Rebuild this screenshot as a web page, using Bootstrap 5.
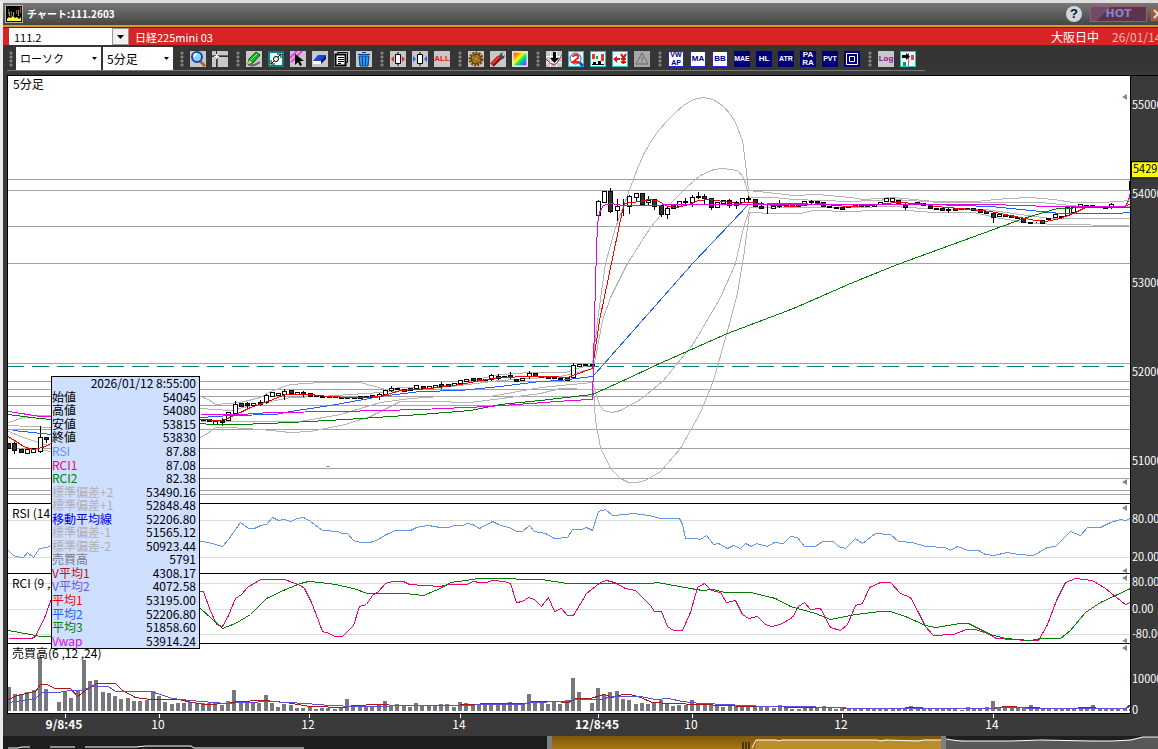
<!DOCTYPE html>
<html lang="ja">
<head>
<meta charset="utf-8">
<meta name="viewport" content="width=device-width, initial-scale=1">
<title>チャート:111.2603</title>
<link href="https://cdn.jsdelivr.net/npm/bootstrap@5.3.0/dist/css/bootstrap.min.css" rel="stylesheet">
<style>
body{font-family:"Noto Sans CJK JP",sans-serif;font-size:12px;line-height:16px;background:#3a3a3a;color:#fff}
.app{height:100vh;min-height:480px;border-left:3px solid #ececec;border-top:3px solid #dedede}
.titlebar{height:25px;background:linear-gradient(#777 0,#454542 88%,#333 88%);padding:0 0 3px 2px;position:relative}
.titlebar::after{content:"";position:absolute;left:0;right:0;bottom:1px;height:2px;background:#d89a22}
.titlebar h1{font-size:10px;line-height:16px;font-weight:700}
.help{width:16px;height:16px;border-radius:8px;border:0;padding:0;background:#cdd7e0;color:#111;font:700 13px/16px "Liberation Sans",sans-serif}
.hot{width:57px;height:16px;border:1px solid #9a5a70;border-radius:0;padding:0;background:linear-gradient(135deg,#704a66 28%,#5b344c 29%);color:#8583cf;font:700 11px/14px "DejaVu Sans",sans-serif}
.closer{width:7px;height:14px;border:0;padding:0;background:#9c6040}
.closer svg{display:block}
.symbolbar{height:17px;background:#d82626;padding-left:6px}
.code{width:103px;height:17px;border:0;border-radius:0;padding:0 5px;background:#fff;color:#000;font-size:11px;line-height:16px}
.drop{width:17px;height:17px;border:1px solid #999;border-radius:0;padding:0;background:#f1f1f1}
.issue{font-size:11px;margin-left:6px}
.session{width:61px}
.date{width:46px;color:#f3b9b9}
.tools{height:30px;background:#353535;gap:6px;padding:2px 0 1px 4px;border-bottom:4px solid #3a3a3a;position:relative}
.tools::after{content:"";position:absolute;left:4px;width:918px;bottom:0;height:1px;background:#777}
.grip{width:6px;height:16px;background:radial-gradient(circle at 4px 2px,#858585 1px,transparent 2px) 0 0/6px 4px}
.grip-first{margin-right:-3px}
.tools .form-select{height:23px;border:0;border-radius:0;padding:0 12px 0 4px;color:#000;font-size:11px;line-height:23px;background:#fff url("data:image/svg+xml,%3Csvg xmlns='http://www.w3.org/2000/svg' width='5' height='3'%3E%3Cpath d='M0 0h5L2.500 3z'/%3E%3C/svg%3E") no-repeat right 4px center/5px 3px}
.tools .sel-a{width:85px}.tools .sel-b{width:70px;font-size:12px;margin-left:-4px;margin-right:-1px}
.tb{width:16px;height:16px;border:0;border-radius:0;padding:0;background:#c8c8c8;color:#fff;font:700 8px/16px "Liberation Sans",sans-serif;overflow:hidden;white-space:nowrap}
.tb svg{display:block}
.navy{background:#000078}
.three{font-size:7px}
.lit{background:#fff;color:#000080;box-shadow:inset 0 0 0 1px #2323e0}
.duo{line-height:8px;white-space:normal}
.redtext{color:#f01010}
.plum{color:#8b158b}
.cy{background:#e9ffff;box-shadow:inset 0 0 0 1px #27c7c9}
.charts{margin-left:4px;border-top:1px solid #000;min-height:0}
.panel{background:#fff;border:1px solid #000;border-top:0;color:#000;min-width:0;position:relative}
.panel svg,.scale svg{display:block;width:100%;height:100%}
.sub{height:70px;flex:none}
.scale{width:27px;flex:none;overflow:hidden}
.scale text{font-size:11px;fill:#fff}
.scale .now{fill:#000}
.caption{position:absolute;left:4px;top:1px}
.caption-main{left:5px;top:0}
.line{fill:none;stroke-width:1;shape-rendering:crispEdges}
.tip{position:absolute;left:48px;top:373px;width:149px;background:#cfdfff;border:1px solid #000;color:#000;z-index:2}
.tip table{width:100%;height:271px;font-size:12px;line-height:12px}
.tip td,.tip th{padding:0 3px 1px 0;font-weight:400;white-space:nowrap}
.tip td{text-align:right}
.times{height:22px;margin:0 28px 0 5px;position:relative;flex:none}
.times span{position:absolute;top:2px;width:60px;margin-left:-31px;text-align:center}
.times span::before{content:"";position:absolute;left:31px;top:-2px;width:1px;height:4px;background:#fff}
.overview{height:13px;flex:none;background:#1e1e1e}
.overview svg{display:block;width:100%;height:13px}
</style>
</head>
<body>
<div class="app d-flex flex-column overflow-hidden position-relative">
<header class="titlebar d-flex align-items-center flex-shrink-0">
<svg width="18" height="18" viewBox="0 0 18 18" aria-hidden="true"><path fill="#b4b4aa" d="M0 0h18v18H0z"/><path d="M1 1h16v16H1z"/><path fill="#ff4" d="M2 16v-2l2-2 2 1 2-2 2 2 2-1 2 2 2-2v4z"/><path stroke="#e22" d="M3.500 4v5M6.500 6v6M11.500 5v4M15.500 2v6"/><path stroke="#2e2" d="M4.500 7v4M8.500 7v4M13.500 5v6"/></svg>
<h1 class="m-0 ms-1">チャート:111.2603</h1>
<div class="ms-auto d-flex align-items-center"><button class="help" aria-label="ヘルプ">?</button><button class="hot ms-2">HOT</button><button class="closer ms-1 overflow-hidden" aria-label="閉じる"><svg width="14" height="14"><path d="M3 3l8 8M11 3l-8 8" stroke="#ddd" stroke-width="2"/></svg></button></div>
</header>
<div class="symbolbar d-flex align-items-center flex-shrink-0 overflow-hidden text-nowrap">
<input class="code" value="111.2" aria-label="銘柄コード"><button class="drop d-flex align-items-center justify-content-center" aria-label="銘柄一覧"><svg width="7" height="4"><path d="M0 0h7L3.500 4z"/></svg></button>
<span class="issue">日経225mini 03</span>
<span class="session ms-auto">大阪日中</span><span class="date overflow-hidden">26/01/14</span>
</div>
<div class="tools d-flex align-items-center flex-shrink-0" role="toolbar">
<span class="grip grip-first"></span>
<select class="form-select sel-a flex-shrink-0" aria-label="足種"><option>ローソク</option></select>
<select class="form-select sel-b flex-shrink-0" aria-label="期間"><option>5分足</option></select>
<span class="grip"></span>
<button class="tb" aria-label="拡大"><svg width="16" height="16"><path d="M10 10l5 5" stroke="#a63" stroke-width="3"/><circle cx="7" cy="6" r="5" fill="#8cd4ff" stroke="#1647b8" stroke-width="2"/><path d="M4 6a3 3 0 0 1 3-3" stroke="#fff" stroke-width="2" fill="none"/></svg></button>
<button class="tb" aria-label="十字線"><svg width="16" height="16"><path d="M0 5.500h16M4.500 0v16" stroke="#333"/><path d="M4.500 3v5M2 5.500h5" stroke="#dfffdf"/><path d="M0 4.500h4M6 4.500h10M5.500 7v9" stroke="#587058"/></svg></button>
<span class="grip"></span>
<button class="tb" aria-label="描画"><svg width="16" height="16"><path d="M2 13c4 3 8 1 12-2" stroke="#666" stroke-width="2" fill="none"/><path d="M2 13l1-5 7-7 4 3-7 8z" fill="#16b51e" stroke="#07560a"/><path d="M2 13l1-4 3 3z" fill="#ffe28a"/><path d="M5 9l6-6" stroke="#8f8"/></svg></button>
<button class="tb cy" aria-label="トレンド線"><svg width="16" height="16"><path d="M1 1h14v14H1z" fill="none" stroke="#087f80" stroke-width="2"/><path d="M3 13L13 3M9 3h4v4M3 9v4h4" stroke="#000" fill="none"/><circle cx="8" cy="8" r="2.500" fill="#fff" stroke="#000"/></svg></button>
<button class="tb" aria-label="選択"><svg width="16" height="16"><path d="M0 7l7-7M1 11L12 0" stroke="#f03aec" stroke-width="2"/><path d="M5 3v11l3-3 2 4 2-1-2-4h4z"/></svg></button>
<button class="tb" aria-label="消しゴム"><svg width="16" height="16"><path d="M1 10l5-6h8l-4 6z" fill="#1b42d8"/><path d="M1 10h8v3H1z" fill="#fff"/><path d="M9 10l5-6v4l-5 5z" fill="#001879"/></svg></button>
<button class="tb" aria-label="コピー"><svg width="16" height="16"><path d="M3.500 1.500h10v10h-10z" fill="#fff" stroke="#000"/><path d="M1.500 3.500h10v11h-10z" fill="#fff" stroke="#000" stroke-width="2"/><path d="M4 6.500h6M4 8.500h6M4 10.500h6M4 12.500h3" stroke="#000"/></svg></button>
<button class="tb" aria-label="削除"><svg width="16" height="16"><path d="M3 5h10l-1 10H4z" fill="#2196f3" stroke="#063b82"/><path d="M2 3.500h12M6 1.500h4M6.500 6v8M9.500 6v8" stroke="#063b82"/></svg></button>
<span class="grip"></span>
<button class="tb" aria-label="幅を広げる"><svg width="16" height="16"><path d="M8 1v14" stroke="#000"/><path d="M5.500 3.500h5v9h-5z" fill="#fff" stroke="#000"/><path d="M1 8l3-3v6zM15 8l-3-3v6z" fill="#e52727"/></svg></button>
<button class="tb" aria-label="幅を狭める"><svg width="16" height="16"><path d="M8 1v14" stroke="#000"/><path d="M5.500 3.500h5v9h-5z" fill="#fff" stroke="#000"/><path d="M4 8L1 5v6zM12 8l3-3v6z" fill="#235ef0"/></svg></button>
<button class="tb redtext" aria-label="全表示">ALL</button>
<span class="grip"></span>
<button class="tb" aria-label="設定"><svg width="16" height="16"><circle cx="8" cy="8" r="6" fill="none" stroke="#714707" stroke-width="3" stroke-dasharray="2 1"/><circle cx="8" cy="8" r="5" fill="#95671a" stroke="#543605"/><path d="M4 6l8 4M10 4l-4 8" stroke="#c2933a"/></svg></button>
<button class="tb" aria-label="ツール"><svg width="16" height="16"><path d="M2 14l8-8" stroke="#8b0909" stroke-width="5"/><path d="M2 13l8-8" stroke="#f33" stroke-width="2"/><path d="M9 7l1-4 3-2-1 3 1 1 2-1-1 3-3 2z" fill="#444"/></svg></button>
<button class="tb" aria-label="配色"><svg width="16" height="16"><defs><linearGradient id="hue" x2="1" y2="1"><stop stop-color="#f33"/><stop offset=".25" stop-color="#f90"/><stop offset=".42" stop-color="#ff0"/><stop offset=".58" stop-color="#0e6"/><stop offset=".76" stop-color="#28f"/><stop offset="1" stop-color="#d0f"/></linearGradient></defs><path d="M1 1h14v14H1z" fill="url(#hue)" stroke="#fff"/></svg></button>
<span class="grip"></span>
<button class="tb" aria-label="売買"><svg width="16" height="16"><path d="M4.500 0v16M10.500 0v16M0 5.500h16M0 11.500h16" stroke="#fff"/><path d="M0 8l4 4 4 2 3-2 5-8" fill="none" stroke="#c22" stroke-width="1"/><path d="M7 1h3v6h3l-4.500 5L4 7h3z"/></svg></button>
<button class="tb cy" aria-label="検索"><svg width="16" height="16"><path d="M11 11l4 4" stroke="#214bc8" stroke-width="3"/><circle cx="7.500" cy="7.500" r="5.500" fill="#fff" stroke="#214bc8"/><path d="M5 6q0-2 3-2 3 0 2 3l-5 4h6" fill="none" stroke="#e22" stroke-width="2"/></svg></button>
<button class="tb cy" aria-label="出来高"><svg width="16" height="16"><path d="M2 3h3v5H2zM11 3h3v7h-3z" fill="#e33"/><path d="M6 5h2v3H6z" fill="#1b1"/><path d="M2 13.500h12" stroke="#111"/><path d="M3 11h3v3H3zM8 10h3v4H8z"/></svg></button>
<button class="tb cy" aria-label="通貨"><svg width="16" height="16"><path d="M1 8l4-3v2h3v2H5v3z" fill="#e11"/><path d="M9 3l2.500 4L14 3M11.500 7v6M9 8h5M9 11h5" fill="none" stroke="#d11" stroke-width="2"/></svg></button>
<button class="tb" aria-label="警告"><svg width="16" height="16"><path d="M0 0h16v16H0z" fill="#a7a7a7"/><path d="M8 2l6 11H2zM8 6v4M8 11v1" fill="none" stroke="#686868"/></svg></button>
<span class="grip"></span>
<button class="tb lit duo three">VW AP</button><button class="tb lit">MA</button><button class="tb lit">BB</button><button class="tb navy three">MAE</button><button class="tb navy">HL</button><button class="tb navy three">ATR</button><button class="tb navy duo">PA RA</button><button class="tb navy three">PVT</button>
<button class="tb navy" aria-label="枠"><svg width="16" height="16"><path d="M2.500 2.500h11v11h-11zM5.500 5.500h5v5h-5z" fill="none" stroke="#fff"/></svg></button>
<span class="grip"></span>
<button class="tb plum">Log</button>
<button class="tb cy" aria-label="右へ移動"><svg width="16" height="16"><path d="M8 2h1v13H8zM11 4h3v5h-3z" fill="#e44"/><path d="M3 11h3v4H3z" fill="#18a020"/><path d="M2 4h4V2l4 3.500L6 9V7H2z"/></svg></button>
</div>

<main class="charts flex-fill d-flex flex-column">
<section class="flex-fill d-flex overflow-hidden">
<div class="panel flex-fill"><span class="caption caption-main">5分足</span>
<svg viewBox="8 76 1122 427" preserveAspectRatio="none" role="img" aria-label="価格チャート"><g id="levels" class="line" stroke="#a2a2a2"></g><path d="M7 366.500h1123" class="line" stroke="#008078" stroke-dasharray="17 8"/><g id="bands" transform="translate(.5 .5)"></g><g id="candles" shape-rendering="crispEdges"></g><g id="averages" transform="translate(.5 .5)"></g><path fill="#888" d="M1122 97l5-3v6zM1122 482l5-3v6z"/><path d="M1129 181h1v9h-1z"/><path d="M326 466.500h4" stroke="#999"/></svg></div>
<div class="scale"><svg viewBox="1131 76 27 427" preserveAspectRatio="none"><text x="1132" y="109">55000</text><text x="1132" y="198">54000</text><text x="1132" y="287">53000</text><text x="1132" y="375">52000</text><text x="1132" y="464">51000</text><path d="M1131 161h40v17h-40z"/><path fill="#ff0" d="M1132 162h40v15h-40z"/><text class="now" x="1133" y="173">54290</text></svg></div>
</section>
<section class="sub d-flex"><div class="panel flex-fill"><span class="caption">RSI (14)</span><svg viewBox="8 504 1122 69" preserveAspectRatio="none" role="img" aria-label="RSI"><path class="line" stroke="#dcdcdc" d="M8 520.500h1122M8 557.500h1122"/><g id="rsi" transform="translate(.5 .5)"></g><path fill="#888" d="M1122 508l5-3v6zM1122 571l5-3v5z"/></svg></div><div class="scale"><svg viewBox="1131 504 27 69" preserveAspectRatio="none"><text x="1132" y="523">80.00</text><text x="1132" y="560">20.00</text></svg></div></section>
<section class="sub d-flex"><div class="panel flex-fill"><span class="caption">RCI (9 ,26)</span><svg viewBox="8 574 1122 69" preserveAspectRatio="none" role="img" aria-label="RCI"><path class="line" stroke="#dcdcdc" d="M8 583.500h1122M8 609.500h1122M8 634.500h1122"/><g id="rci" transform="translate(.5 .5)"></g><path fill="#888" d="M1122 578l5-3v6zM1122 641l5-3v5z"/></svg></div><div class="scale"><svg viewBox="1131 574 27 69" preserveAspectRatio="none"><text x="1132" y="586">80.00</text><text x="1132" y="612">0.00</text><text x="1132" y="637">-80.00</text></svg></div></section>
<section class="sub d-flex"><div class="panel flex-fill"><svg viewBox="8 644 1122 69" preserveAspectRatio="none" role="img" aria-label="売買高"><g id="volume" fill="#77777f" shape-rendering="crispEdges"></g><g id="volavg" transform="translate(.5 .5)"></g><path fill="#888" d="M1122 648l5-3v6z"/></svg><span class="caption">売買高(6 ,12 ,24)</span></div><div class="scale"><svg viewBox="1131 644 27 69" preserveAspectRatio="none"><text x="1132" y="682">10000</text><text x="1132" y="713">0</text></svg></div></section>
</main>
<div class="times" id="times"></div>
<div class="overview"><svg viewBox="3 736 1155 13" preserveAspectRatio="none" aria-hidden="true"><defs><linearGradient id="gold" x2="0" y2="1"><stop stop-color="#7c560c"/><stop offset="1" stop-color="#a97812"/></linearGradient></defs><path fill="url(#gold)" d="M551 736h391v13H551z"/><path fill="#b98e28" d="M755 749l2-9h185v9z"/><path fill="#595959" d="M946 740h14l6 1h60l20-1 60 1 20-1 16-3h16v12H946z"/><g fill="none" stroke="#fff"><path d="M8 748h10l4-1h8M50 747h25M85 747h51l10-1h45l3 2h110"/><path d="M752 748l4-8h20l3 1 3-1h95l3 1 6-1 32 1 6-1h18M946 739l6 1 9 1h50l30-1 50 1h22l18-1 12-3h15"/></g><path fill="#808080" d="M547 736h5v13h-5zM941 736h5v13h-5z"/><path fill="#4b3509" d="M742 742h2v7h-2zM745 742h2v7h-2zM748 742h2v7h-2z"/></svg></div>

<div class="tip"><table><tbody id="quote"><tr><td colspan="2">2026/01/12 8:55:00</td></tr></tbody></table></div>
</div>
<script>
const $=id=>document.getElementById(id);
const line=(id,color,pts)=>$(id).insertAdjacentHTML('beforeend',`<polyline class="line" stroke="${color}" points="${pts}"/>`);
const rect=(x,y,w,h,f='',s='')=>`<rect x="${x}" y="${y}" width="${w}" height="${h}"${f?` fill="${f}"`:''}${s?` stroke="${s}"`:''}/>`;

// horizontal price levels
$('levels').innerHTML=[179,190,226,263,363,381,389,396,405,429,448,468,478,490,494].map(y=>`<path d="M8 ${y}.5H1130"/>`).join('');

// deviation bands
["8,422 20,418 30,415 51,415","8,425 51,427","8,431 20,436 35,441 51,446","8,437 25,447 51,451",
"200,396 208,399 215,404 240,402 260,397 270,391 290,384 320,382 360,382 385,389 400,387 430,388 460,382 500,374 530,372 565,372 580,367 592,364 597,320 605,263 615,227 627,195 637,168 643,154 650,142 658,130 667,120 675,112 683,105 693,99 703,97 713,99 723,106 730,114 735,122 742,140 745,163 748,190 767,192 793,195 817,194 850,197 863,199 893,197 933,201 975,201 1007,198 1030,197 1053,199 1073,202 1103,202 1130,200",
"200,408 230,410 260,403 290,397 320,396 380,392 460,385 500,380 560,376 593,368 602,320 610,297 627,263 650,227 670,203 687,186 700,175 713,169 723,168 737,170 743,177 747,190 749,197 773,197 793,199 850,201 893,199 940,202 1000,202 1040,202 1080,206 1130,206",
"200,421 300,421 340,414 380,402 410,398 440,396 490,396 540,387 592,382 596,395 599,404 603,410 612,412 620,410 640,399 663,380 693,343 720,297 735,263 743,227 748,212 749,207 793,207 850,207 893,206 940,209 985,209 1020,214 1050,218 1130,218",
"200,437 207,433 215,427 230,427 260,429 290,432 310,431 345,424 370,416 400,401 430,401 470,402 540,393 560,388 593,389 595,420 600,447 610,468 620,478 628,482 636,482 645,480 660,471 680,448 700,412 713,380 728,327 737,293 743,257 747,227 749,212 773,213 800,213 813,210 850,211 873,210 907,210 933,212 973,212 1000,218 1027,222 1053,224 1127,225 1130,226"
].forEach(p=>line('bands','#b4b4b4',p));

// candles: x, body top, body bottom, filled, high, low
const C=[[8,443,448,1],[14,443,450,1,442,453],[21,449,452,1],[27,449,453,0],[33,448,452,0],[40,437,451,0,426,452],[46,437,439,1,437,442],
[203,419,420,1],[209,419,421,1],[215,421,424,0],[222,420,422,1,418,425],[228,412,420,0],[235,404,413,0,401,413],[241,403,406,1],[247,403,405,1,402,407],[253,403,405,0],[260,402,404,1,400,405],[266,395,402,0,394,403],[272,392,396,0],[278,393,395,0],[284,391,394,0,389,399],[291,390,393,1],[297,392,394,0],[303,392,394,1,391,396],[310,393,396,1],[316,395,396,0],[322,396,397,1],[329,396,397,0],[335,396,397,1],[341,397,398,0],[347,397,398,1],[354,397,398,0],[360,396,398,1],[366,396,397,0],[372,395,397,1],[379,394,396,0,393,399],[385,390,394,0],[391,388,390,0,386,391],[397,388,389,1],[404,389,391,0],[410,388,390,1],[416,385,388,0],[423,386,388,1],[429,386,388,0],[435,385,387,0],[441,384,386,1,382,388],[448,384,386,1],[454,383,385,0],[460,380,383,0],[466,379,381,0],[473,378,380,1],[479,378,380,1],[485,379,380,1],[491,375,379,0,374,380],[498,376,378,1,374,379],[504,376,377,1],[510,375,377,1,372,378],[516,379,381,1],[522,378,380,0],[529,373,376,0,371,378],[535,373,376,1],[541,376,377,0],[548,376,378,1],[554,376,378,1],[560,378,379,1],[567,377,380,1],[573,365,377,0,363,378],[579,364,366,0],[585,364,365,1],[592,364,365,1],
[598,201,215,0,200,219],[604,191,202,0],[610,191,211,1,188,212],[617,206,210,0,199,220],[623,205,205,1,199,215],[629,196,206,0,195,213],[636,193,197,0,193,201],[642,193,204,1],[648,200,202,0,196,204],[654,199,206,1,199,209],[661,205,214,1,205,216],[667,208,214,0,206,218],[673,204,208,1],[679,201,206,0],[685,201,202,1,198,205],[692,197,202,0,195,206],[698,196,197,1,192,198],[704,196,198,1,194,203],[711,198,207,1,198,209],[717,202,207,0],[723,200,203,0],[729,200,205,1,199,207],[736,202,205,0,201,208],[742,198,202,0],[748,198,199,1,196,202],[755,199,206,1],[761,206,208,1,202,208],[767,208,208,1,205,213],[773,206,208,0],[779,203,206,0,200,207],[786,204,205,0],[792,203,206,1],[798,205,206,0],[804,201,205,0],[811,201,202,1,200,204],[817,201,202,1],[823,202,206,1],[829,206,207,0],[836,207,208,1],[842,207,209,1],[848,206,207,0],[855,205,206,1],[861,205,206,1],[867,205,206,1],[874,204,206,0],[880,202,204,0],[886,198,201,0],[892,198,201,0],[898,200,203,1],[905,205,207,1,203,209],[911,203,204,1],[917,202,204,0],[923,203,205,1],[930,206,208,1],[936,208,209,1],[942,208,210,1],[948,209,210,1,207,212],[955,208,210,1],[961,208,209,0],[967,208,209,1],[973,208,210,0],[980,209,212,1],[986,211,213,1],[993,213,217,1,212,222],[999,214,216,0],[1005,214,216,1],[1011,215,217,1],[1017,217,218,1],[1023,218,222,1],[1030,222,223,0],[1036,222,222,1],[1042,220,223,1],[1048,218,219,1],[1055,214,217,0],[1061,216,217,1],[1067,207,215,0],[1073,207,212,0],[1080,204,206,0],[1086,205,206,0],[1092,205,206,1],[1098,206,207,1],[1105,206,208,1],[1111,204,206,0,203,208],[1117,206,207,1],[1123,206,207,1]];
$('candles').innerHTML=C.map(([x,t,b,f,h=t,l=b])=>rect(x,h,1,l-h+1,'#000')+rect(x-1.5,t+.5,4,b-t,f?'#333':'#fff','#000')).join('');

// moving averages and VWAP
line('averages','#008000',"8,414 30,417 51,419");
line('averages','#008000',"200,423 210,424 240,424 290,422 345,419 420,414 470,410 500,404 540,400 592,394 623,380 657,364 727,333 793,308 850,283 897,264 993,229 1023,218 1057,208 1090,207 1130,207");
line('averages','#2060ff',"13,430 51,434");
line('averages','#2060ff',"200,417 230,415 275,414 290,411 330,405 380,396 420,391 460,390 500,386 540,381 560,380 592,376 595,373 693,262 748,204 787,203 827,204 930,204 960,205 990,206 1010,208 1030,210 1060,213 1115,213 1130,212");
line('averages','#f00',"8,436 25,447 33,449 42,447 51,443");
line('averages','#f00',"200,419 220,420 227,418 240,412 250,407 270,400 285,394 310,394 328,396 350,397 365,397 380,396 400,390 430,388 460,384 480,380 500,377 530,376 550,376 567,377 575,374 592,368 599,320 622,210 624,203 640,201 648,199 657,200 667,206 677,207 688,204 698,200 710,199 723,201 737,203 747,202 760,203 773,205 793,206 807,204 823,203 833,205 850,206 870,205 895,202 920,203 935,206 960,208 990,211 1010,215 1035,220 1045,221 1060,218 1075,212 1085,207 1100,206 1125,206 1130,203");
line('averages','#e800e8',"8,411 40,416 51,416");
line('averages','#e800e8',"200,414 240,414 270,412 340,411 420,409 488,406 530,403 570,400 592,399 593,364 595,280 597,223 599,212 603,205 610,203 623,205 700,204 850,204 1000,204 1010,205 1060,206 1125,206 1128,200 1130,192");

line('rsi','#6495ed',"8,550 13,555 20,557 23,557 27,552 33,557 39,548 46,547 51,545 200,541 208,542 222,546 228,539 240,522 248,528 254,528 260,525 266,524 272,517 278,520 284,519 290,521 297,518 303,517 310,521 322,530 338,531 341,533 347,533 353,540 360,542 368,542 374,541 386,534 395,530 410,530 416,527 428,525 440,527 448,527 454,525 462,525 467,523 472,524 479,528 492,521 498,524 511,528 516,531 522,531 529,525 534,531 545,533 554,538 567,537 572,529 581,529 586,527 592,530 598,511 605,509 612,515 626,514 632,513 648,515 661,518 679,518 682,524 685,538 694,538 700,539 706,535 713,544 718,543 727,548 733,545 740,548 745,543 751,546 756,543 767,546 774,542 783,543 790,536 797,537 804,546 815,546 822,541 833,541 838,546 845,548 855,538 862,543 875,533 890,534 898,541 912,542 925,546 945,547 950,550 957,546 968,550 978,550 985,554 993,555 1007,552 1018,554 1033,555 1047,547 1055,546 1070,531 1080,535 1087,527 1100,527 1110,522 1120,519 1125,520 1130,518");
line('rci','#f0007c',"8,638 31,638 35,636 45,615 51,598 70,580 170,580 200,591 203,591 209,608 216,624 222,626 228,615 235,598 241,594 247,587 260,579 284,579 300,585 304,588 311,602 318,620 322,631 329,633 334,636 342,636 353,625 359,606 366,604 372,595 378,591 385,583 392,581 403,581 409,584 440,586 448,584 466,584 473,581 479,582 486,582 492,580 504,581 510,583 516,602 522,601 528,597 534,599 541,606 548,597 554,611 561,608 567,615 573,615 586,593 600,582 606,580 614,582 625,588 635,590 650,605 654,611 661,611 667,626 673,630 682,630 690,612 697,587 704,583 711,590 720,592 726,602 735,600 742,614 748,618 757,616 765,624 771,626 780,624 792,617 798,606 804,602 810,609 820,608 830,627 840,630 847,624 855,605 862,603 869,587 880,582 890,582 900,593 910,597 918,612 925,626 933,635 953,634 966,629 975,629 987,633 996,638 1012,639 1028,640 1038,640 1047,624 1056,600 1065,582 1075,578 1092,580 1105,588 1116,597 1125,604 1130,602");
line('rci','#008000',"8,630 30,634 40,636 51,636 170,590 200,608 222,628 235,623 250,614 266,598 285,589 300,583 308,581 320,582 335,584 353,588 367,593 405,593 423,595 440,588 450,582 465,580 478,578 513,578 518,579 541,579 567,583 650,583 657,582 679,586 690,588 702,590 712,589 725,592 750,592 775,598 790,606 815,613 830,619 855,614 880,611 890,611 905,616 925,625 935,627 960,623 968,623 990,634 1005,638 1030,640 1040,638 1060,638 1070,630 1085,612 1100,602 1115,595 1130,588");

// one bar per five minutes; the session opens at x = 65
const V=[24,17,17,19,21,54,22,0,9,20,13,21,51,30,31,19,18,15,12,13,10,10,11,20,15,9,7,8,8,9,8,8,8,9,6,10,21,10,8,9,8,16,8,4,7,6,3,3,4,2,3,3,2,4,12,5,5,5,5,6,10,6,7,5,4,8,6,5,5,7,7,4,9,8,7,7,6,8,6,6,9,8,8,17,10,10,7,9,7,11,33,19,0,8,23,16,19,20,12,11,7,8,7,8,11,7,5,6,6,11,7,7,7,5,4,5,6,4,4,5,4,4,3,6,3,2,2,3,4,3,5,3,2,3,3,2,3,2,2,2,2,3,2,3,5,3,3,2,2,3,2,2,1,4,2,2,4,10,4,3,3,3,4,6,4,2,2,3,2,3,2,4,3,6,3,3,2,2,3,2];
$('volume').innerHTML=V.map((h,i)=>rect(Math.round(63+(i-9)*6.27),711-h,4,h)).join('');
line('volavg','#b01818',"8,699 17,695 35,691 40,684 46,684 55,688 70,688 77,696 92,685 97,683 115,683 122,690 135,697 150,699 178,699 192,702 205,704 228,703 236,701 264,700 285,702 310,706 345,707 352,705 380,704 397,705 450,705 490,703 525,703 533,701 553,701 568,702 576,698 590,698 600,695 604,694 612,697 622,694 630,694 640,697 652,702 670,703 700,704 725,705 745,706 770,706 796,707 825,707 860,708 900,708 910,707 935,708 993,708 1005,706 1028,707 1050,708 1070,708 1085,707 1105,708 1125,708 1130,704");
line('volavg','#5c50d8',"8,702 35,698 42,692 57,692 70,690 80,690 92,686 108,686 115,691 150,691 160,694 172,698 190,700 225,703 245,702 270,701 305,703 330,705 355,706 380,706 397,705 450,705 500,704 522,704 530,702 565,701 575,699 600,699 612,696 640,696 655,699 668,698 682,701 700,703 728,704 740,705 770,706 800,706 830,707 860,708 990,708 1000,707 1050,708 1125,708 1130,706");

// time axis
$('times').innerHTML=[[65,'9/8:45',1],[159,'10'],[309,'12'],[460,'14'],[598,'12/8:45',1],[692,'10'],[842,'12'],[993,'14']].map(([x,t,b])=>`<span class="${b?'fw-bold':''}" style="left:${(x-8)/11.22}%">${t}</span>`).join('');

// values under the cursor
$('quote').insertAdjacentHTML('beforeend',[['始値','54045'],['高値','54080'],['安値','53815'],['終値','53830'],['RSI','87.88','#6495ed'],['RCI1','87.08','#f0007c'],['RCI2','82.38','#008000'],['標準偏差+2','53490.16','#b0b0b0'],['標準偏差+1','52848.48','#b0b0b0'],['移動平均線','52206.80','#0000e0'],['標準偏差-1','51565.12','#b0b0b0'],['標準偏差-2','50923.44','#b0b0b0'],['売買高','5791','#777780'],['V平均1','4308.17','#b01818'],['V平均2','4072.58','#6a5acd'],['平均1','53195.00','#f00'],['平均2','52206.80','#2060ff'],['平均3','51858.60','#008000'],['Vwap','53914.24','#e800e8']].map(([n,v,c='#000'])=>`<tr><th scope="row" style="color:${c}">${n}</th><td>${v}</td></tr>`).join(''));
</script>
<script src="https://cdn.jsdelivr.net/npm/bootstrap@5.3.0/dist/js/bootstrap.bundle.min.js"></script>
</body>
</html>
